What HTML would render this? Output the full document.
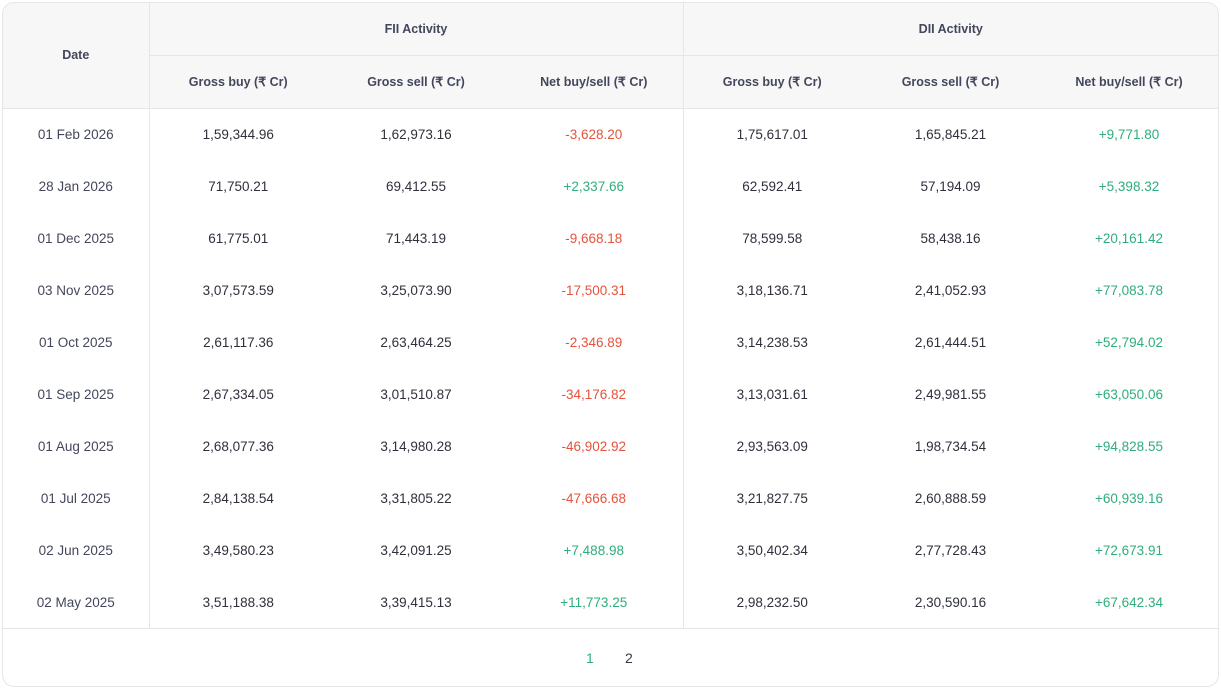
<!DOCTYPE html>
<html><head><meta charset="utf-8"><style>
*{margin:0;padding:0;box-sizing:border-box}
body{width:1221px;height:689px;background:#fff;font-family:"Liberation Sans",sans-serif;color:#44475b}
.wrap{position:absolute;left:2px;top:2px;width:1217px;height:685px;border:1px solid #e6e6e6;border-radius:12px;overflow:hidden}
table{border-collapse:collapse;table-layout:fixed;width:1215px}
th{background:#f7f7f7;font-weight:bold;font-size:12.5px;color:#44475b;height:52px}
tr.h2 th{height:53px}
td{height:52px;font-size:13.5px;text-align:center}
th,td{text-align:center}
.bl{border-left:1px solid #e6e6e6}
.bb{border-bottom:1px solid #e6e6e6}
.v{color:#2e303c}
.r{color:#e5533d}
.g{color:#2fae7c}
.d{color:#44475b}
.pg{position:absolute;top:625px;left:0;width:1215px;height:60px;border-top:1px solid #e6e6e6;font-size:14px}
.pg span{position:absolute;top:21px}
</style></head><body><div class="wrap">
<table>
<colgroup><col style="width:146px"><col style="width:178px"><col style="width:178px"><col style="width:178px"><col style="width:178px"><col style="width:179px"><col style="width:178px"></colgroup>
<tr><th rowspan="2" class="bb">Date</th><th colspan="3" class="bl bb">FII Activity</th><th colspan="3" class="bl bb">DII Activity</th></tr>
<tr class="h2"><th class="bl bb">Gross buy (₹ Cr)</th><th class="bb">Gross sell (₹ Cr)</th><th class="bb">Net buy/sell (₹ Cr)</th><th class="bl bb">Gross buy (₹ Cr)</th><th class="bb">Gross sell (₹ Cr)</th><th class="bb">Net buy/sell (₹ Cr)</th></tr>
<tr><td class="d">01 Feb 2026</td><td class="bl v">1,59,344.96</td><td class="v">1,62,973.16</td><td class="r">-3,628.20</td><td class="bl v">1,75,617.01</td><td class="v">1,65,845.21</td><td class="g">+9,771.80</td></tr>
<tr><td class="d">28 Jan 2026</td><td class="bl v">71,750.21</td><td class="v">69,412.55</td><td class="g">+2,337.66</td><td class="bl v">62,592.41</td><td class="v">57,194.09</td><td class="g">+5,398.32</td></tr>
<tr><td class="d">01 Dec 2025</td><td class="bl v">61,775.01</td><td class="v">71,443.19</td><td class="r">-9,668.18</td><td class="bl v">78,599.58</td><td class="v">58,438.16</td><td class="g">+20,161.42</td></tr>
<tr><td class="d">03 Nov 2025</td><td class="bl v">3,07,573.59</td><td class="v">3,25,073.90</td><td class="r">-17,500.31</td><td class="bl v">3,18,136.71</td><td class="v">2,41,052.93</td><td class="g">+77,083.78</td></tr>
<tr><td class="d">01 Oct 2025</td><td class="bl v">2,61,117.36</td><td class="v">2,63,464.25</td><td class="r">-2,346.89</td><td class="bl v">3,14,238.53</td><td class="v">2,61,444.51</td><td class="g">+52,794.02</td></tr>
<tr><td class="d">01 Sep 2025</td><td class="bl v">2,67,334.05</td><td class="v">3,01,510.87</td><td class="r">-34,176.82</td><td class="bl v">3,13,031.61</td><td class="v">2,49,981.55</td><td class="g">+63,050.06</td></tr>
<tr><td class="d">01 Aug 2025</td><td class="bl v">2,68,077.36</td><td class="v">3,14,980.28</td><td class="r">-46,902.92</td><td class="bl v">2,93,563.09</td><td class="v">1,98,734.54</td><td class="g">+94,828.55</td></tr>
<tr><td class="d">01 Jul 2025</td><td class="bl v">2,84,138.54</td><td class="v">3,31,805.22</td><td class="r">-47,666.68</td><td class="bl v">3,21,827.75</td><td class="v">2,60,888.59</td><td class="g">+60,939.16</td></tr>
<tr><td class="d">02 Jun 2025</td><td class="bl v">3,49,580.23</td><td class="v">3,42,091.25</td><td class="g">+7,488.98</td><td class="bl v">3,50,402.34</td><td class="v">2,77,728.43</td><td class="g">+72,673.91</td></tr>
<tr><td class="d">02 May 2025</td><td class="bl v">3,51,188.38</td><td class="v">3,39,415.13</td><td class="g">+11,773.25</td><td class="bl v">2,98,232.50</td><td class="v">2,30,590.16</td><td class="g">+67,642.34</td></tr>
</table>
<div class="pg"><span class="g" style="left:583px">1</span><span style="left:622px;color:#363845">2</span></div>
</div></body></html>
